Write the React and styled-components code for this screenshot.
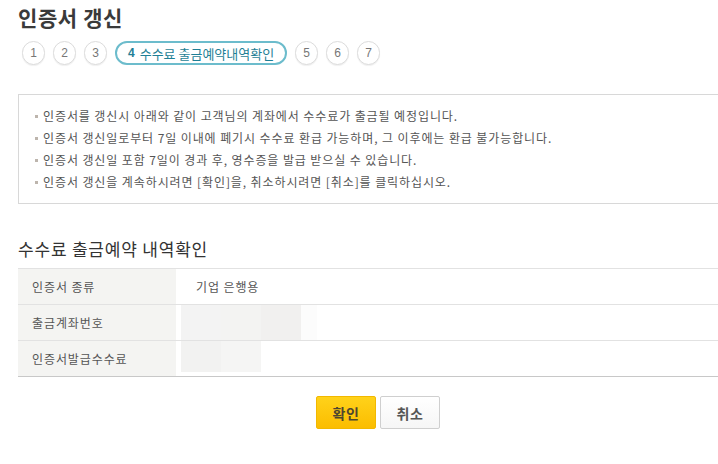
import React from 'react';
import styled, { createGlobalStyle } from 'styled-components';

const GlobalStyle = createGlobalStyle`
  html, body {
    margin: 0;
    padding: 0;
    background: #fff;
    overflow: hidden;
  }
  body {
    font-family: "Noto Sans CJK KR", "Noto Sans", sans-serif;
    color: #444;
  }
`;

const Page = styled.div`
  width: 720px;
  padding: 0 0 0 18px;
`;

const Title = styled.h1`
  margin: 0;
  padding-top: 4px;
  font-size: 21px;
  line-height: 27px;
  font-weight: 700;
  color: #3a3a3a;
  letter-spacing: 0.6px;
`;

const Steps = styled.ol`
  display: flex;
  align-items: center;
  gap: 8px;
  list-style: none;
  margin: 0;
  padding: 10px 0 0 4px;
`;

const Step = styled.li`
  box-sizing: border-box;
  height: 24px;
  min-width: 23px;
  border-radius: 12px;
  display: flex;
  align-items: center;
  justify-content: center;
  font-family: "Liberation Sans", "Noto Sans CJK KR", sans-serif;
  font-size: 12px;
  color: #777;
  border: 1px solid #dcdcdc;
  box-shadow: 0 1px 1px rgba(0, 0, 0, 0.06);
  background: #fff;
`;

const ActiveStep = styled(Step)`
  border: 2px solid #6cbccc;
  padding: 0 11px;
  gap: 5px;
  font-family: "Noto Sans CJK KR", sans-serif;
  font-size: 13px;
  color: #1f7f96;
  box-shadow: none;
  b {
    font-family: "Liberation Sans", sans-serif;
    font-weight: 700;
    font-size: 12px;
  }
`;

const Notice = styled.ul`
  box-sizing: border-box;
  list-style: none;
  margin: 29px 0 0;
  padding: 10px 0 11px 16px;
  border: 1px solid #d8d8d8;
  height: 110px;
`;

const NoticeItem = styled.li`
  position: relative;
  padding-left: 8px;
  font-size: 12px;
  line-height: 22px;
  letter-spacing: 0.9px;
  color: #555;
  &::before {
    content: '';
    position: absolute;
    left: 0;
    top: 10px;
    width: 3px;
    height: 3px;
    background: #bdb5ad;
  }
`;

const SectionTitle = styled.h2`
  margin: 32px 0 0;
  font-size: 17px;
  line-height: 25px;
  font-weight: 400;
  letter-spacing: 0.8px;
  color: #333;
`;

const Table = styled.div`
  margin-top: 7px;
  border-top: 1px solid #e2e2e2;
  border-bottom: 1px solid #c8c8c8;
`;

const Row = styled.div`
  display: grid;
  grid-template-columns: 158px 1fr;
  height: 35px;
  & + & {
    border-top: 1px solid #e2e2e2;
  }
`;

const Label = styled.div`
  background: #f4f4f2;
  display: flex;
  align-items: center;
  padding-left: 14px;
  font-size: 12px;
  letter-spacing: 0.9px;
  color: #555;
`;

const Value = styled.div`
  display: flex;
  align-items: ${p => (p.masked ? 'stretch' : 'center')};
  padding-left: ${p => (p.masked ? '5px' : '20px')};
  font-size: 12px;
  letter-spacing: 0.9px;
  color: #555;
`;

const Mask = styled.div`
  display: flex;
  margin-bottom: ${p => p.gap || 0}px;
`;

const MaskCell = styled.span`
  width: ${p => p.w}px;
  background: ${p => p.c};
`;

const Buttons = styled.div`
  display: flex;
  justify-content: center;
  gap: 4px;
  margin-top: 19px;
`;

const Button = styled.button`
  box-sizing: border-box;
  width: 60px;
  height: 33px;
  border-radius: 2px;
  font-family: "Noto Sans CJK KR", sans-serif;
  font-size: 14px;
  font-weight: 700;
  letter-spacing: 0.5px;
  cursor: pointer;
  color: ${p => (p.primary ? '#4d4630' : '#555')};
  border: 1px solid ${p => (p.primary ? '#f2b800' : '#cfcfcf')};
  background: ${p =>
    p.primary
      ? 'linear-gradient(#ffd21a, #fbbd00)'
      : 'linear-gradient(#ffffff, #f6f6f6)'};
`;

const notices = [
  '인증서를 갱신시 아래와 같이 고객님의 계좌에서 수수료가 출금될 예정입니다.',
  '인증서 갱신일로부터 7일 이내에 폐기시 수수료 환급 가능하며, 그 이후에는 환급 불가능합니다.',
  '인증서 갱신일 포함 7일이 경과 후, 영수증을 발급 받으실 수 있습니다.',
  '인증서 갱신을 계속하시려면 [확인]을, 취소하시려면 [취소]를 클릭하십시오.',
];

export default function App() {
  return (
    <Page>
      <GlobalStyle />
      <Title>인증서 갱신</Title>
      <Steps>
        <Step>1</Step>
        <Step>2</Step>
        <Step>3</Step>
        <ActiveStep>
          <b>4</b>수수료 출금예약내역확인
        </ActiveStep>
        <Step>5</Step>
        <Step>6</Step>
        <Step>7</Step>
      </Steps>

      <Notice>
        {notices.map((text, i) => (
          <NoticeItem key={i}>{text}</NoticeItem>
        ))}
      </Notice>

      <SectionTitle>수수료 출금예약 내역확인</SectionTitle>
      <Table>
        <Row>
          <Label>인증서 종류</Label>
          <Value>기업 은행용</Value>
        </Row>
        <Row>
          <Label>출금계좌번호</Label>
          <Value masked>
            <Mask>
              <MaskCell w={40} c="#f3f3f3" />
              <MaskCell w={40} c="#f3f3f2" />
              <MaskCell w={40} c="#f1f0ef" />
              <MaskCell w={16} c="#fcfcfc" />
            </Mask>
          </Value>
        </Row>
        <Row>
          <Label>인증서발급수수료</Label>
          <Value masked>
            <Mask gap={4}>
              <MaskCell w={40} c="#f2f2f1" />
              <MaskCell w={40} c="#f5f5f4" />
            </Mask>
          </Value>
        </Row>
      </Table>

      <Buttons>
        <Button primary>확인</Button>
        <Button>취소</Button>
      </Buttons>
    </Page>
  );
}
